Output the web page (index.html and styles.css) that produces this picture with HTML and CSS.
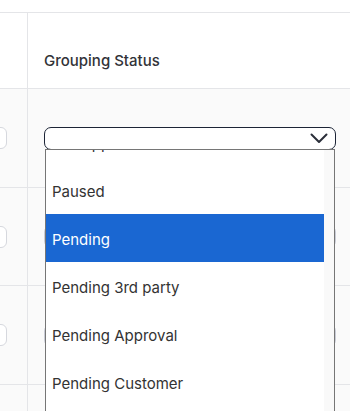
FILE: index.html
```html
<!DOCTYPE html>
<html>
<head>
<meta charset="utf-8">
<link rel="stylesheet" href="styles.css">
</head>
<body>
<div class="table">
  <div class="topbar"></div>
  <div class="row header">
    <div class="cell lead"></div>
    <div class="cell main"><span class="title">Grouping Status</span></div>
  </div>
  <div class="row body">
    <div class="cell lead"><div class="stub"></div></div>
    <div class="cell main">
      <div class="select open">
        <svg class="chev" width="18" height="11" viewBox="0 0 18 11"><polyline points="1.5,1.5 9,9 16.5,1.5" fill="none" stroke="#2b2f3a" stroke-width="2" stroke-linecap="round" stroke-linejoin="round"/></svg>
      </div>
    </div>
  </div>
  <div class="row body short">
    <div class="cell lead"><div class="stub"></div></div>
    <div class="cell main"><div class="select"></div></div>
  </div>
  <div class="row body">
    <div class="cell lead"><div class="stub"></div></div>
    <div class="cell main"><div class="select"></div></div>
  </div>
  <div class="row body last">
    <div class="cell lead"></div>
    <div class="cell main"></div>
  </div>

  <div class="dropdown">
    <div class="options">
      <div class="opt">Not Applicable</div>
      <div class="opt">Paused</div>
      <div class="opt sel">Pending</div>
      <div class="opt">Pending 3rd party</div>
      <div class="opt">Pending Approval</div>
      <div class="opt">Pending Customer</div>
    </div>
    <div class="track"></div>
  </div>
</div>
</body>
</html>
```

FILE: styles.css
```css
html, body {
  margin: 0;
  padding: 0;
  background: #ffffff;
}
body {
  width: 350px;
  height: 411px;
  overflow: hidden;
  font-family: Inter, "Noto Sans", "Liberation Sans", sans-serif;
}
.table {
  position: relative;
  width: 350px;
  height: 411px;
  overflow: hidden;
}
.topbar {
  height: 12px;
  border-bottom: 1px solid #e4e5e8;
  background: #ffffff;
}
.row {
  display: grid;
  grid-template-columns: 28px 1fr;
  border-bottom: 1px solid #e4e5e8;
}
.cell.lead {
  border-right: 1px solid #e4e5e8;
  display: flex;
  align-items: center;
  justify-content: flex-end;
  padding-right: 20px;
  overflow: hidden;
}
.cell.main {
  padding-left: 16px;
  padding-right: 14px;
  display: flex;
  align-items: center;
}
.header {
  height: 75px;
  background: #ffffff;
}
.header .cell.main {
  align-items: flex-start;
  padding-top: 38px;
}
.title {
  font-size: 15px;
  line-height: 20px;
  font-weight: 500;
  color: #323338;
}
.body {
  height: 98px;
  background: #fafafa;
}
.body.short {
  height: 97px;
}
.body.last {
  height: 26px;
  border-bottom: none;
}
.stub {
  flex: none;
  width: 30px;
  height: 20px;
  border: 1px solid #d6d8de;
  border-radius: 6px;
  background: #ffffff;
}
.select {
  position: relative;
  box-sizing: border-box;
  width: 292px;
  height: 23px;
  border: 1px solid #c9ccd6;
  border-radius: 7px;
  background: #ffffff;
}
.select.open {
  border: 1.5px solid #1c2436;
}
.chev {
  position: absolute;
  right: 7px;
  top: 5px;
}
.dropdown {
  position: absolute;
  left: 45px;
  top: 149px;
  width: 290px;
  height: 262px;
  box-sizing: border-box;
  border: 1px solid #767676;
  border-bottom: none;
  background: #ffffff;
  overflow: hidden;
  display: flex;
}
.options {
  width: 278px;
  margin-top: -32px;
}
.opt {
  box-sizing: border-box;
  height: 48px;
  line-height: 47px;
  padding-top: 2px;
  padding-left: 6px;
  font-size: 15px;
  color: #333333;
  white-space: nowrap;
}
.opt.sel {
  background: #1a67d2;
  color: #ffffff;
}
.track {
  flex: 1;
  background: #f9f9f9;
}
```
